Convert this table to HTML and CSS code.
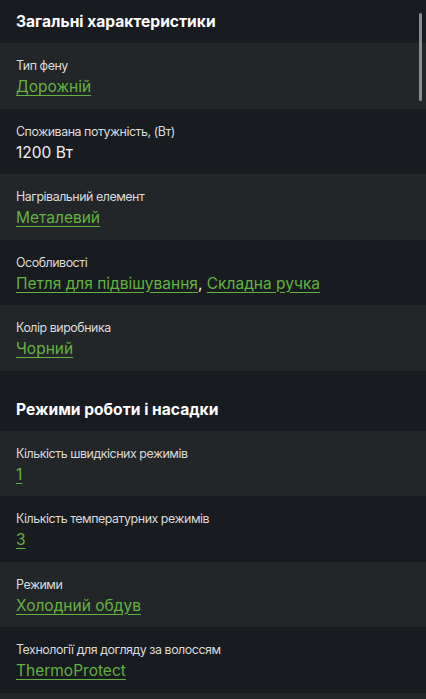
FILE: index.html
```html
<!DOCTYPE html>
<html lang="uk">
<head>
  <meta charset="UTF-8">
  <title>Характеристики</title>
  <link rel="stylesheet" href="styles.css">
</head>
<body>

  <!-- Загальні -->
  <section class="group">
    <h2 class="group-title">Загальні характеристики</h2>
    <div class="row">
      <div class="label">Тип фену</div>
      <div class="value"><a href="#">Дорожній</a></div>
    </div>
    <div class="row">
      <div class="label">Споживана потужність, (Вт)</div>
      <div class="value">1200 Вт</div>
    </div>
    <div class="row">
      <div class="label">Нагрівальний елемент</div>
      <div class="value"><a href="#">Металевий</a></div>
    </div>
    <div class="row">
      <div class="label">Особливості</div>
      <div class="value"><a href="#">Петля для підвішування</a>, <a href="#">Складна ручка</a></div>
    </div>
    <div class="row">
      <div class="label">Колір виробника</div>
      <div class="value"><a href="#">Чорний</a></div>
    </div>
  </section>

  <!-- Режими -->
  <section class="group next">
    <h2 class="group-title">Режими роботи і насадки</h2>
    <div class="row">
      <div class="label">Кількість швидкісних режимів</div>
      <div class="value"><a href="#">1</a></div>
    </div>
    <div class="row">
      <div class="label">Кількість температурних режимів</div>
      <div class="value"><a href="#">3</a></div>
    </div>
    <div class="row">
      <div class="label">Режими</div>
      <div class="value"><a href="#">Холодний обдув</a></div>
    </div>
    <div class="row">
      <div class="label">Технології для догляду за волоссям</div>
      <div class="value"><a href="#">ThermoProtect</a></div>
    </div>
    <div class="row row-empty"></div>
  </section>

  <div class="scrollbar"></div>

</body>
</html>
```

FILE: styles.css
```css
html, body {
  margin: 0;
  padding: 0;
  height: 100%;
  overflow: hidden;
  background: #181b1f;
  font-family: Inter, 'Noto Sans', sans-serif;
  color: #e6e6e6;
}

.group-title {
  margin: 0;
  padding: 12px 16px 11px;
  font-size: 15.6px;
  line-height: 20px;
  font-weight: 700;
  color: #fff;
}

.next .group-title {
  padding-top: 29px;
}

.row {
  padding: 15px 16px 10.5px;
}

.row:nth-of-type(odd) {
  background: #222629;
}

.row-empty {
  height: 40px;
}

.label {
  font-size: 12.4px;
  line-height: 16px;
  letter-spacing: -0.45px;
  color: #dcdcdc;
}

.value {
  margin-top: 2px;
  font-size: 15.5px;
  line-height: 22px;
  color: #f2f2f2;
}

.value a {
  color: #62b23f;
  text-decoration: underline;
  text-underline-offset: 3px;
}

.scrollbar {
  position: absolute;
  top: 13px;
  right: 4px;
  width: 3px;
  height: 88px;
  border-radius: 2px;
  background: #8a8d90;
}
```
